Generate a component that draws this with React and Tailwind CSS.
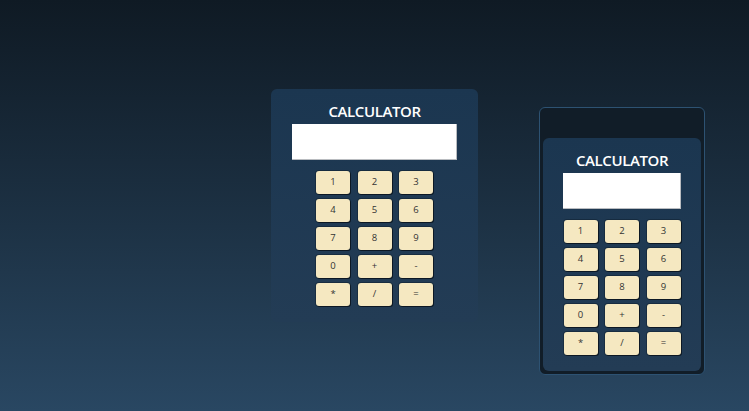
import React from 'react';

const keys = ['1', '2', '3', '4', '5', '6', '7', '8', '9', '0', '+', '-', '*', '/', '='];

function Calculator({ displayWidth }) {
  return (
    <div className="flex h-[233px] w-full flex-col items-center rounded-md bg-gradient-to-b from-[#1b3650] to-[#233c55] pt-[12px]">
      <h1 className="h-[23px] text-[15px] font-semibold leading-[20px] tracking-[-0.4px] text-white">CALCULATOR</h1>
      <input
        type="text"
        readOnly
        className={`h-[36px] bg-white border-r border-b border-[#b9bcc0] ${displayWidth}`}
      />
      <div className="mt-[11px] grid grid-cols-3 gap-x-[7.5px] gap-y-[5px]">
        {keys.map((k) => (
          <button
            key={k}
            type="button"
            className="h-[23px] w-[34px] rounded-[3px] bg-[#f5e8c1] text-[9.5px] text-[#333] shadow-[1px_1px_0_rgba(8,16,24,0.7),0_0_0_1px_rgba(10,20,30,0.35)]"
          >
            {k}
          </button>
        ))}
      </div>
    </div>
  );
}

export default function App() {
  return (
    <div
      className="flex h-[411px] w-[749px] items-start bg-gradient-to-b from-[#0f1a24] to-[#294762] pl-[271px] pt-[89px]"
      style={{ fontFamily: '"Open Sans", "Noto Sans", sans-serif' }}
    >
      <div className="w-[207px]">
        <Calculator displayWidth="w-[165px]" />
      </div>
      <div className="ml-[61px] mt-[18px] w-[166px] rounded-md border-[1.5px] border-[#2d5272] bg-[#111d28] px-[3px] pb-[3px] pt-[30px]">
        <Calculator displayWidth="w-[118px]" />
      </div>
    </div>
  );
}
